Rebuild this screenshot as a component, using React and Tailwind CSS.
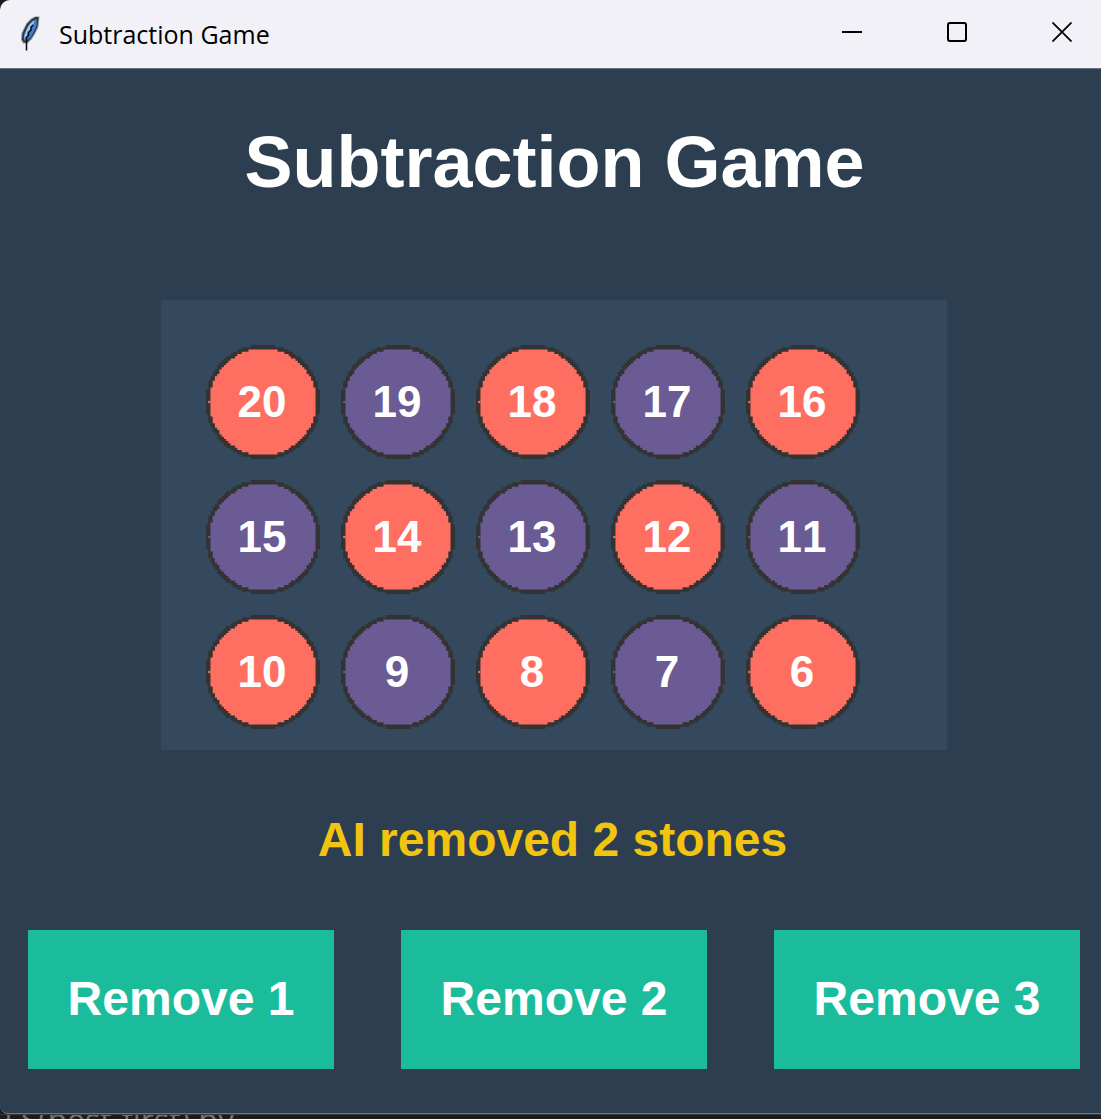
const stones = [20, 19, 18, 17, 16, 15, 14, 13, 12, 11, 10, 9, 8, 7, 6];

// Row-by-row runs of a disc on a coarse grid, which gives the stepped edge.
function disc(size, radius) {
  let d = "";
  const start = (51 - size) / 2;
  for (let row = 0; row < size; row++) {
    const dy = row + 0.5 - size / 2;
    const inset = Math.max(0, Math.round(size / 2 - Math.sqrt(radius * radius - dy * dy)));
    const run = size - 2 * inset;
    d += `M${start + inset} ${start + row}h${run}v1h-${run}z`;
  }
  return d;
}
const OUTER = disc(51, 25.7);
const INNER = disc(47, 23.8);

function Stone({ number }) {
  const fill = number % 2 === 0 ? "#ff6f61" : "#6b5b95";
  return (
    <div className="grid size-[114px] place-items-center">
      <svg viewBox="0 0 51 51" className="col-start-1 row-start-1 size-full overflow-visible" aria-hidden="true">
        <path d={OUTER} fill="#333333" />
        <path d={INNER} fill={fill} />
        <path d="M1 25h1v1h-1z" fill={fill} />
      </svg>
      <span className="z-10 col-start-1 row-start-1 pr-0.5 text-[44px] leading-none font-bold text-white">{number}</span>
    </div>
  );
}

function Feather() {
  return (
    <svg viewBox="0 0 20 36" className="h-9 w-5" aria-hidden="true">
      <path d="M19.500 0.500H15L11 2.500L6.500 7L4 12L1.500 17L1 24L3 27.500L7.500 27.500L12 23L15 18L18.500 11Z" fill="#8d939c" />
      <path d="M18.500 1H15.500L11.500 3.500L7 8L4.500 13L2.500 17.500L2 23.500L4 26.500L7 26.500L11 22.500L14.500 17L17.500 10.500Z" fill="#30343b" />
      <path d="M17 3L12.500 5L8.500 9L6 14L4 18.500V24L6 25L10.500 21.500L13.500 16.500L16.500 10Z" fill="#3f7fd0" />
      <path d="M14.500 4L11 7L8 11L6 15.500L4.500 20V23L7 19L7.500 16L10.500 13L11 10L13.500 7.500Z" fill="#a3cbef" />
      <path d="M13 9L11 11.500L11 14L8.500 16.500L8.500 19.500L6.500 21.500L6.500 34.500" fill="none" stroke="#0a0a0c" strokeWidth="1.500" />
    </svg>
  );
}

export default function App() {
  return (
    <div className="flex min-h-screen flex-col bg-[#1c1a1b] font-['Liberation_Sans',Arial,sans-serif] [font-kerning:none]">
      <div className="flex grow flex-col overflow-hidden rounded-tl-[10px] rounded-bl-[8px] border-b border-[#6b7785] bg-[#2d3e50]">
        <header className="flex h-[69px] items-center border-b border-[#66717f] bg-[#f3f1f8]">
          <div className="flex grow items-center gap-[19px] pl-5">
            <Feather />
            <span className="font-['Open_Sans','Noto_Sans',sans-serif] text-[25px] leading-[34px] text-black">Subtraction Game</span>
          </div>
          <div className="flex gap-[85px] self-stretch pr-[29px] pb-1 text-black">
            <button aria-label="Minimize" className="grid place-items-center">
              <svg viewBox="0 0 20 20" className="size-5" fill="none" stroke="currentColor" strokeWidth="2" aria-hidden="true"><path d="M0 10H20" /></svg>
            </button>
            <button aria-label="Maximize" className="grid place-items-center">
              <svg viewBox="0 0 20 20" className="size-5" fill="none" stroke="currentColor" strokeWidth="2" aria-hidden="true"><rect x="1" y="1" width="18" height="18" rx="2" /></svg>
            </button>
            <button aria-label="Close" className="grid place-items-center">
              <svg viewBox="0 0 20 20" className="size-5" fill="none" stroke="currentColor" strokeWidth="1.800" aria-hidden="true"><path d="M0.500 0.500L19.500 19.500M19.500 0.500L0.500 19.500" /></svg>
            </button>
          </div>
        </header>

        <main className="flex flex-col pb-11">
          <h1 className="mt-[53px] pl-2 text-center text-[72px] leading-[80px] font-bold text-white">Subtraction Game</h1>

          <section aria-label="Stones" className="mt-[98px] mr-[154px] ml-[161px] bg-[#34495e] pt-[45px] pb-[21px] pl-[45px]">
            <div className="grid grid-cols-[repeat(5,114px)] gap-[21px]">
              {stones.map((n) => (
                <Stone key={n} number={n} />
              ))}
            </div>
          </section>

          <p className="mt-[62px] pl-1 text-center text-[48px] leading-[56px] font-bold text-[#f1c40f]">AI removed 2 stones</p>

          <div className="mt-[62px] mr-[21px] ml-7 grid grid-cols-3 gap-[67px]">
            {[1, 2, 3].map((n) => (
              <button key={n} className="h-[139px] bg-[#1abc9c] pb-0.5 text-[48px] font-bold text-white">
                Remove {n}
              </button>
            ))}
          </div>
        </main>
      </div>
      <div className="h-[5px] overflow-hidden border-t border-[#3a3838] pl-1">
        <span className="block font-['Open_Sans','Noto_Sans',sans-serif] text-[32px] leading-[10px] text-[#77726f]">FS(best-first) by</span>
      </div>
    </div>
  );
}
